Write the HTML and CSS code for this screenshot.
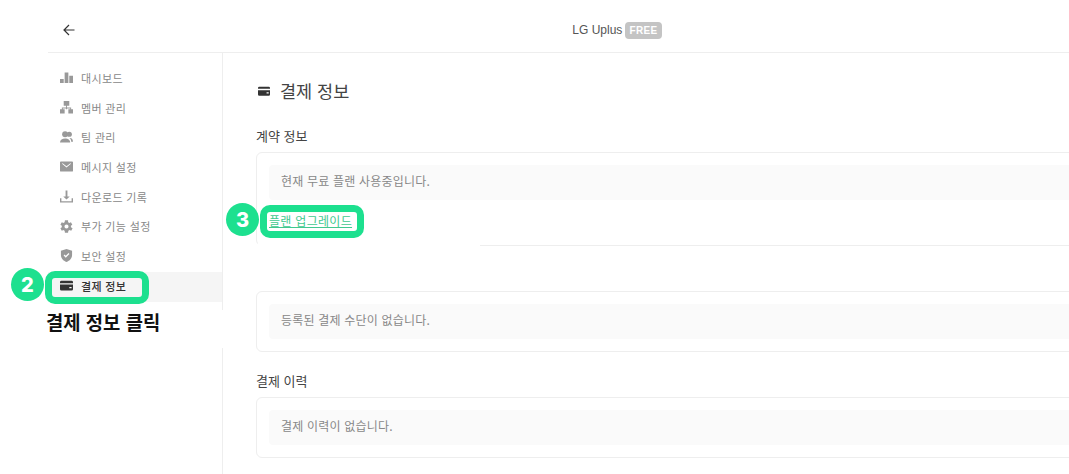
FILE: index.html
```html
<!DOCTYPE html>
<html lang="ko">
<head>
<meta charset="utf-8">
<title>결제 정보</title>
<link rel="stylesheet" href="styles.css">
</head>
<body>
<div class="app">
  <header class="topbar">
    <svg class="back" viewBox="0 0 12 12" width="12" height="12"><path d="M11.500 6H1M6 1L1 6l5 5"/></svg>
    <div class="org"><span class="org-name">LG Uplus</span><span class="plan">FREE</span></div>
    <span></span>
  </header>
  <div class="body">
    <nav class="side">
      <a class="item"><svg class="ico" viewBox="0 0 14 14"><path d="M0 8.500h4V13H0zM5 1.500h4V13H5zM10 5h4v8h-4z"/></svg>대시보드</a>
      <a class="item"><svg class="ico" viewBox="0 0 14 14"><path d="M4 0h6v5H7.500v2H12v2h2v4.500H9V9h2V8H7.500v1H9H5h1.500V8H3v1h2v4.500H0V9h2V7h4.500V5H4z"/></svg>멤버 관리</a>
      <a class="item"><svg class="ico" viewBox="0 0 14 14"><circle cx="5.500" cy="3.500" r="3.200"/><circle cx="10" cy="3.500" r="2.800"/><path d="M0 12.500c0-3 2.500-4.500 5.500-4.500s5.500 1.500 5.500 4.500zM10.800 7.500c2 0 3.200 1.500 3.200 4h-2c0-1.600-.3-2.800-1.800-3.900z"/></svg>팀 관리</a>
      <a class="item"><svg class="ico" viewBox="0 0 14 14"><path fill-rule="evenodd" d="M1 1.500h12a1 1 0 0 1 1 1v9a1 1 0 0 1-1 1H1a1 1 0 0 1-1-1v-9a1 1 0 0 1 1-1zm1.500 2.800L7 8l4.500-3.700V3.200L7 6.600 2.500 3.200z"/></svg>메시지 설정</a>
      <a class="item"><svg class="ico" viewBox="0 0 14 14"><path d="M6 .5h2v6.500h2.500L7 10.300 3.500 7H6zM0 9h1.500v3h11V9H14v4.500H0z"/></svg>다운로드 기록</a>
      <a class="item"><svg class="ico" viewBox="3 2.500 18 19"><path fill-rule="evenodd" d="M19.400 13a7.500 7.500 0 0 0 0-2l2.100-1.600-2-3.500-2.500 1a7.500 7.500 0 0 0-1.700-1L15.300 3h-4.600l-.4 2.900a7.500 7.500 0 0 0-1.700 1l-2.500-1-2 3.500L6.200 11a7.500 7.500 0 0 0 0 2l-2.100 1.600 2 3.500 2.500-1a7.500 7.500 0 0 0 1.700 1l.4 2.900h4.600l.4-2.900a7.500 7.500 0 0 0 1.700-1l2.500 1 2-3.500zM13 15a3 3 0 1 1 0-6 3 3 0 0 1 0 6z" transform="translate(-1 0)"/></svg>부가 기능 설정</a>
      <a class="item"><svg class="ico" viewBox="0 0 14 14"><path fill-rule="evenodd" d="M7 0l6 2v4.500c0 3.500-2.500 6.300-6 7.500-3.500-1.200-6-4-6-7.500V2zM6.200 9.300l4-4-1-1-3 3-1.300-1.300-1 1z"/></svg>보안 설정</a>
      <a class="item active"><svg class="ico" viewBox="0 0 14 14"><path fill-rule="evenodd" d="M1.500 2h11A1.500 1.500 0 0 1 14 3.500V4.500H0v-1A1.500 1.500 0 0 1 1.500 2zM0 6h14v5a1.500 1.500 0 0 1-1.500 1.500h-11A1.500 1.500 0 0 1 0 11zM10 8.500v1.500h2.500V8.500z"/></svg>결제 정보</a>
    </nav>
    <main class="main">
      <h1 class="title"><svg class="title-ico" viewBox="0 0 14 14"><path fill-rule="evenodd" d="M1.500 2h11A1.500 1.500 0 0 1 14 3.500V4.500H0v-1A1.500 1.500 0 0 1 1.500 2zM0 6h14v5a1.500 1.500 0 0 1-1.500 1.500h-11A1.500 1.500 0 0 1 0 11zM10 8.500v1.500h2.500V8.500z"/></svg>결제 정보</h1>
      <h2 class="label">계약 정보</h2>
      <section class="card contract">
        <p class="notice">현재 무료 플랜 사용중입니다.</p>
        <a class="upgrade">플랜 업그레이드</a>
      </section>
      <section class="card method">
        <p class="notice">등록된 결제 수단이 없습니다.</p>
      </section>
      <h2 class="label">결제 이력</h2>
      <section class="card">
        <p class="notice">결제 이력이 없습니다.</p>
      </section>
    </main>
  </div>
</div>
<div class="mask mask-card"></div>
<div class="caption">결제 정보 클릭</div>
<div class="hl hl-2"></div>
<div class="hl hl-3"></div>
<div class="num num-2">2</div>
<div class="num num-3">3</div>
</body>
</html>
```
FILE: styles.css
```css
* { box-sizing: border-box; }
html, body { margin: 0; height: 100%; overflow: hidden; background: #fff; }
body { position: relative; font-family: "Noto Sans CJK KR", "Liberation Sans", sans-serif; color: #333; }
.app { margin-left: 48px; width: 1138px; }
.topbar { height: 53px; padding-top: 8px; border-bottom: 1px solid #eeeeee; display: grid; grid-template-columns: 1fr auto 1fr; align-items: center; }
.back { margin-left: 15px; fill: none; stroke: #333; stroke-width: 1.200; }
.org { display: flex; align-items: center; gap: 3px; font-family: "Liberation Sans", sans-serif; }
.org-name { font-size: 12px; color: #555; }
.plan { background: #c4c4c4; color: #fff; font-size: 10px; font-weight: 700; border-radius: 4px; padding: 2px 4px; line-height: 13px; letter-spacing: .4px; }
.body { display: flex; height: 430px; }
.side { width: 175px; border-right: 1px solid #eeeeee; padding-top: 11px; flex: none; }
.item { display: flex; align-items: center; height: 29.700px; padding: 0 0 2px 12px; font-size: 11px; color: #888; gap: 8px; letter-spacing: .35px; }
.ico { width: 13px; height: 13px; fill: #999; flex: none; }
.item.active { background: #f5f5f5; color: #333; font-weight: 500; height: 30px; }
.item.active .ico { fill: #333; }
.main { flex: 1; padding: 26px 33px 0; min-width: 0; }
.title { display: flex; align-items: center; margin: 0 0 24px; font-size: 17.500px; font-weight: 400; color: #444; line-height: 24px; height: 24px; }
.title-ico { width: 12px; height: 12px; fill: #333; margin: 0 10px 0 2px; }
.label { margin: 0 0 7px; font-size: 13px; font-weight: 400; color: #444; line-height: 18px; }
.card { border: 1px solid #eeeeee; border-radius: 6px; padding: 12px; height: 61px; }
.card.contract { height: 94px; }
.card.method { margin-top: 45px; margin-bottom: 20px; }
.notice { margin: 0; background: #fafafa; border-radius: 4px; height: 35px; padding: 0 12px 4px; display: flex; align-items: center; font-size: 12px; color: #888; letter-spacing: .2px; }
.upgrade { display: inline-block; margin-top: 13px; font-size: 12px; line-height: 16px; color: #41c98f; text-decoration: underline; letter-spacing: .3px; }
.mask { position: absolute; background: #fff; }
.mask-card { left: 258px; top: 238px; width: 222px; height: 12px; }
.caption { position: absolute; left: 46px; top: 310px; width: 177px; height: 38px; background: #fff; font-size: 18.800px; font-weight: 700; line-height: 24px; color: #111; }
.hl { position: absolute; border: 7px solid #1de08f; border-radius: 10px; }
.hl-2 { left: 45px; top: 271px; width: 104px; height: 33px; }
.hl-3 { left: 260px; top: 205px; width: 104px; height: 33px; }
.num { position: absolute; width: 33px; height: 33px; border-radius: 50%; background: #1de08f; color: #fff; font-family: Inter, "Liberation Sans", sans-serif; font-weight: 800; font-size: 20px; display: flex; align-items: center; justify-content: center; }
.num-2 { left: 11px; top: 268px; }
.num-3 { left: 226px; top: 203px; }
```
